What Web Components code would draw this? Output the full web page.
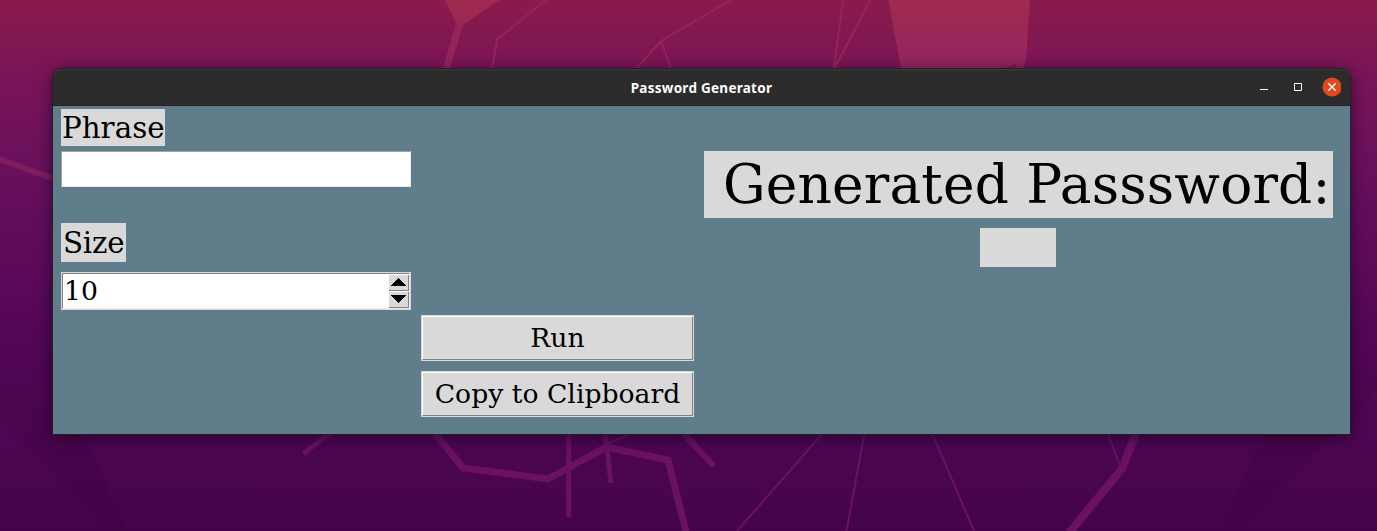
<!DOCTYPE html>
<html lang="en"><head><meta charset="utf-8"><title>Password Generator</title>
<style>html,body{margin:0;height:100%;overflow:hidden}body{font-family:"DejaVu Serif",serif;color:#000}</style></head>
<body>
<desk-top>
<app-window caption="Password Generator">
<form-column slot="fields">
<tk-label class="phrase">Phrase</tk-label><tk-entry></tk-entry>
<tk-label class="size">Size</tk-label><tk-spin>10</tk-spin>
</form-column>
<action-column slot="actions"><tk-button class="run">Run</tk-button><tk-button class="copy">Copy to Clipboard</tk-button></action-column>
<result-column slot="result"><tk-label class="title">Generated Passsword:</tk-label><tk-label class="blank"></tk-label></result-column>
</app-window>
</desk-top>
<script>
const define=(name,html)=>customElements.define(name,class extends HTMLElement{
  constructor(){super();this.attachShadow({mode:'open'}).innerHTML=html;
    const c=this.shadowRoot.querySelector('.caption');if(c)c.textContent=this.getAttribute('caption');}
});
define('desk-top',`<style>
:host{display:block;width:1377px;height:531px;box-sizing:border-box;padding:69px 27px 0 53px;position:relative;overflow:hidden;
background:linear-gradient(#8a1b4b 0,#7b1556 68px,#6f125c 130px,#620d5b 220px,#560758 330px,#4e0652 430px,#45044a 531px)}
svg{position:absolute;left:0;top:0}
</style>
<svg width="1377" height="531" fill="none" stroke-linejoin="miter">
<defs><linearGradient id="k" x2="0" y2="1"><stop stop-color="#a02a50"/><stop offset="1" stop-color="#93255f"/></linearGradient>
<linearGradient id="s" gradientUnits="userSpaceOnUse" x1="0" y1="260" x2="0" y2="440"><stop stop-color="#35003b" stop-opacity="0"/><stop offset="1" stop-color="#35003b" stop-opacity=".2"/></linearGradient></defs>
<path fill="url(#s)" d="M0 260H53V400L84 434L128 531H110L0 421ZM1262 434L1340 260H1377V393L1239 531H1221Z"/>
<path fill="url(#k)" d="M445 0H499L463 25L456 23ZM888.500 0H1030L1026 60L1023 68H901Z"/>
<path fill="#7b1653" d="M1004 68L1016.500 64L1015 68Z"/>
<g stroke="#93245a"><path stroke-width="7" d="M460 22L446 70"/>
<path stroke-width="2" d="M546 0L497 39.500L492 69M731 0L661 41L636 69M661 41L671 69M843 0L834 69L870.500 0"/></g>
<path stroke="#7f1d61" stroke-width="6" d="M0 159L54 179"/>
<g stroke="#6a1160"><path stroke-width="5" d="M303 454L330 433M568.700 433V517M605 433L611 483"/>
<path stroke-width="7" d="M434 432L463 468L548 479L606.500 447L668 460L686.500 533"/>
<path stroke-width="6" d="M681 431L714 466"/>
<path stroke-width="8" d="M1137 430L1122.500 468L1069 533"/>
<path stroke-width="2" d="M606 444L634 433M823 433L737 531M864.500 433L846.500 531M932 433L974 531M1107.500 433L1120 466"/></g>
</svg><slot></slot>`);
define('app-window',`<style>
:host{display:block;position:relative;width:1297px;border-radius:8px 8px 0 0;box-shadow:0 0 0 1px #241f26,0 3px 16px 1px rgba(15,0,20,.58)}
header{height:37px;box-sizing:border-box;border-top:1px solid #3b3b3b;border-bottom:1px solid #222;border-radius:8px 8px 0 0;background:#2c2c2c;display:grid;grid-template-columns:1fr auto 1fr;align-items:center}
.caption{grid-column:2;color:#fff;font:700 13.5px/20px "Noto Sans",sans-serif;width:143px;white-space:nowrap;letter-spacing:.27px;text-align:center}
.tools{justify-self:end;display:flex;padding:0 9px 2px 0}
svg{display:block}
main{height:328px;background:#607d8b;display:grid;grid-template-columns:350px 273px 629px;column-gap:10px;padding-left:8px;box-sizing:border-box}
</style>
<header><span class="caption"></span><div class="tools"><svg width="88" height="20" fill="none">
<path stroke="#fff" d="M7 12.500H15M41.500 6.500H48.500V13.500H41.500Z"/><circle cx="79" cy="10" r="9.500" fill="#e14b1b"/><path stroke="#fff" stroke-width="1.400" d="M75.200 6.200L82.800 13.800M82.800 6.200L75.200 13.800"/></svg></div></header>
<main><slot name="fields"></slot><slot name="actions"></slot><slot name="result"></slot></main>`);
define('form-column',`<style>:host{display:flex;flex-direction:column;align-items:flex-start;padding-top:3px}
::slotted(tk-entry){margin-top:5px}::slotted(.size){margin-top:36px}::slotted(tk-spin){margin-top:10px}</style><slot></slot>`);
define('action-column',`<style>:host{display:flex;flex-direction:column;gap:10px;padding-top:209px}</style><slot></slot>`);
define('result-column',`<style>:host{display:flex;flex-direction:column;align-items:center;gap:10px;padding-top:45px}::slotted(.blank){margin-right:2px}</style><slot></slot>`);
define('tk-label',`<style>:host{display:block;box-sizing:border-box;background:#d9d9d9;white-space:pre;font-size:29.33px}
:host(.phrase){width:104px;height:37px;line-height:38px;padding-left:1px}
:host(.size){width:65px;height:39px;line-height:40px;padding-left:2px;letter-spacing:-.25px}
:host(.title){width:629px;height:67px;font-size:53.33px;line-height:68px;padding-left:19px;letter-spacing:.17px}
:host(.blank){width:76px;height:39px}</style><slot></slot>`);
define('tk-entry',`<style>:host{display:block;width:350px;height:36px;box-sizing:border-box;background:#fff;border:1px solid;border-color:#a3a3a3 #ececec #ececec #a3a3a3}</style>`);
define('tk-spin',`<style>:host{display:flex;width:350px;height:38px;box-sizing:border-box;border:1px solid #d9d9d9;background:#fff;font-size:26.67px}
.in{flex:1;display:flex;border:1px solid;border-color:#828282 #ececec #ececec #828282}
.value{flex:1;padding-left:1px;line-height:34px}
.arrows{width:20px;display:flex;flex-direction:column;padding-top:1px;gap:1px}
.arrows div{height:16px;box-sizing:border-box;background:#d9d9d9;border-right:1px solid #828282;border-bottom:1px solid #828282}
svg{display:block}</style>
<div class="in"><div class="value"><slot></slot></div><div class="arrows"><div><svg width="19" height="15" shape-rendering="crispEdges"><path d="M2 11L9.500 3L17 11Z"/></svg></div><div><svg width="19" height="15" shape-rendering="crispEdges"><path d="M2 3H17L9.500 11Z"/></svg></div></div></div>`);
define('tk-button',`<style>:host{display:block;height:46px;box-sizing:border-box;border:1px solid #d9d9d9;font-size:26.67px}
div{height:44px;box-sizing:border-box;border:1px solid;border-color:#fff #828282 #828282 #fff;background:#d9d9d9;text-align:center;line-height:41px;white-space:nowrap}</style><div><slot></slot></div>`);
</script></body></html>
